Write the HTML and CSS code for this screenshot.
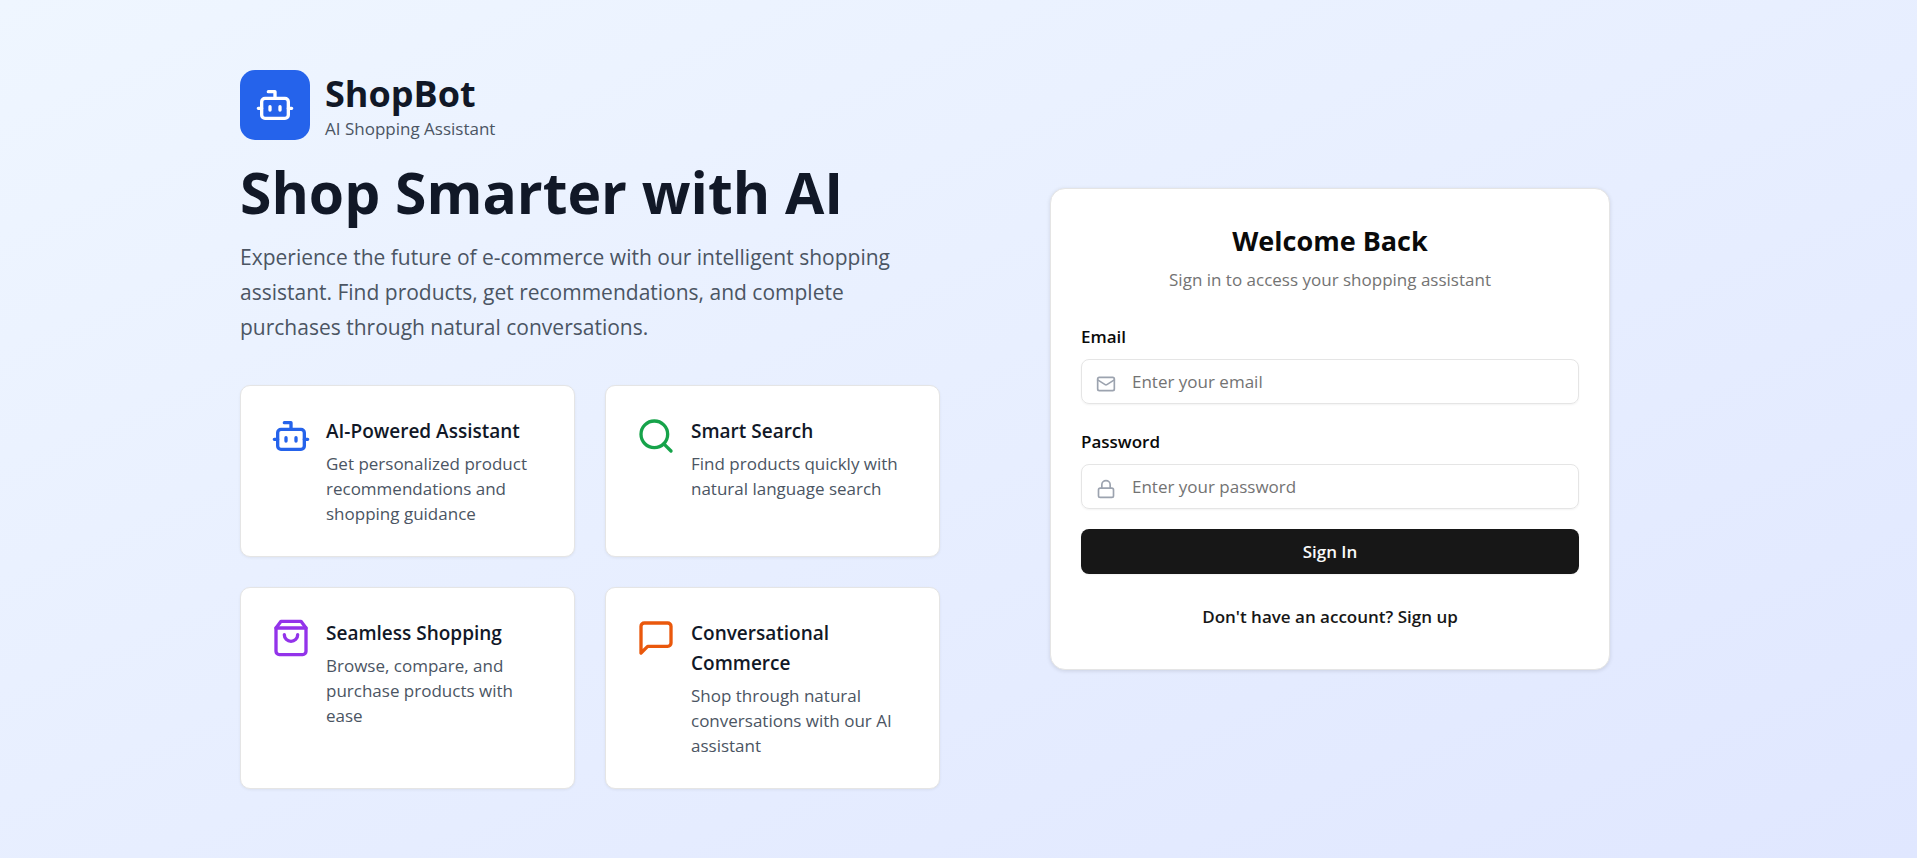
FILE: index.html
```html
<!DOCTYPE html>
<html lang="en">
<head>
<meta charset="utf-8">
<meta name="viewport" content="width=device-width, initial-scale=1">
<title>ShopBot - AI Shopping Assistant</title>
<link rel="stylesheet" href="styles.css">
</head>
<body>
<svg class="sprite" aria-hidden="true">
  <symbol id="bot" viewBox="0 0 24 24"><path d="M12 8V4H8"/><rect width="16" height="12" x="4" y="8" rx="2"/><path d="M2 14h2M20 14h2M15 13v2M9 13v2"/></symbol>
</svg>
<main class="page">
  <div class="columns">
    <section class="intro">
      <div class="brand">
        <div class="brand-mark"><svg class="icon icon-logo"><use href="#bot"/></svg></div>
        <div>
          <p class="brand-name">ShopBot</p>
          <p class="brand-tag">AI Shopping Assistant</p>
        </div>
      </div>
      <h1 class="headline">Shop Smarter with AI</h1>
      <p class="lead">Experience the future of e-commerce with our intelligent shopping assistant. Find products, get recommendations, and complete purchases through natural conversations.</p>
      <div class="features">
        <article class="feature">
          <svg class="icon icon-large blue"><use href="#bot"/></svg>
          <div>
            <h2 class="feature-title">AI-Powered Assistant</h2>
            <p class="feature-text">Get personalized product recommendations and shopping guidance</p>
          </div>
        </article>
        <article class="feature">
          <svg class="icon icon-large green" viewBox="0 0 24 24"><circle cx="11" cy="11" r="8"/><path d="m21 21-4.3-4.3"/></svg>
          <div>
            <h2 class="feature-title">Smart Search</h2>
            <p class="feature-text">Find products quickly with natural language search</p>
          </div>
        </article>
        <article class="feature">
          <svg class="icon icon-large purple" viewBox="0 0 24 24"><path d="M6 2 3 6v14a2 2 0 0 0 2 2h14a2 2 0 0 0 2-2V6l-3-4Z"/><path d="M3 6h18"/><path d="M16 10a4 4 0 0 1-8 0"/></svg>
          <div>
            <h2 class="feature-title">Seamless Shopping</h2>
            <p class="feature-text">Browse, compare, and purchase products with ease</p>
          </div>
        </article>
        <article class="feature">
          <svg class="icon icon-large orange" viewBox="0 0 24 24"><path d="M21 15a2 2 0 0 1-2 2H7l-4 4V5a2 2 0 0 1 2-2h14a2 2 0 0 1 2 2z"/></svg>
          <div>
            <h2 class="feature-title">Conversational Commerce</h2>
            <p class="feature-text">Shop through natural conversations with our AI assistant</p>
          </div>
        </article>
      </div>
    </section>
    <section class="login">
      <h2 class="login-title">Welcome Back</h2>
      <p class="login-text">Sign in to access your shopping assistant</p>
      <form class="form">
        <div class="field">
          <label class="label" for="email">Email</label>
          <div class="control">
            <svg class="icon icon-field" viewBox="0 0 24 24"><rect width="20" height="16" x="2" y="4" rx="2"/><path d="m22 7-8.97 5.7a1.94 1.94 0 0 1-2.06 0L2 7"/></svg>
            <input class="input" id="email" type="email" placeholder="Enter your email">
          </div>
        </div>
        <div class="field">
          <label class="label" for="password">Password</label>
          <div class="control">
            <svg class="icon icon-field" viewBox="0 0 24 24"><rect width="18" height="11" x="3" y="11" rx="2"/><path d="M7 11V7a5 5 0 0 1 10 0v4"/></svg>
            <input class="input" id="password" type="password" placeholder="Enter your password">
          </div>
        </div>
        <button class="submit" type="submit">Sign In</button>
      </form>
      <button class="switch" type="button">Don't have an account? Sign up</button>
    </section>
  </div>
</main>
</body>
</html>
```
FILE: styles.css
```css
* { box-sizing: border-box; }
body, h1, h2, p { margin: 0; }
body {
  font-family: "Open Sans", "Noto Sans", sans-serif;
  font-size: 17px;
  line-height: 25px;
  color: #0a0a0a;
}
button, input { font: inherit; color: inherit; }
.sprite { position: absolute; width: 0; height: 0; }
.icon {
  flex: none;
  fill: none;
  stroke: currentColor;
  stroke-width: 2;
  stroke-linecap: round;
  stroke-linejoin: round;
}
.page {
  min-height: 100vh;
  display: flex;
  align-items: center;
  justify-content: center;
  padding: 20px 0 20px 3px;
  background: linear-gradient(to bottom right, #eff6ff, #e0e7ff);
}
.columns {
  width: 100%;
  max-width: 1440px;
  display: grid;
  grid-template-columns: 1fr 1fr;
  gap: 40px;
  align-items: center;
}
.brand { display: flex; align-items: flex-start; gap: 15px; margin-bottom: 14px; }
.brand-mark {
  display: flex;
  padding: 15px;
  border-radius: 15px;
  background: #2563eb;
  color: #fff;
}
.icon-logo { width: 40px; height: 40px; }
.brand-name { font-size: 36px; line-height: 47px; font-weight: 700; color: #111827; }
.brand-tag { line-height: 24px; color: #4b5563; }
.headline { margin-bottom: 10px; font-size: 57px; line-height: 75px; font-weight: 700; color: #111827; }
.lead { margin-bottom: 40px; font-size: 21px; line-height: 35px; color: #4b5563; }
.features { display: grid; grid-template-columns: 1fr 1fr; gap: 30px; }
.feature {
  display: flex;
  gap: 15px;
  padding: 30px;
  border: 1px solid #e5e5e5;
  border-radius: 10px;
  background: #fff;
  box-shadow: 0 1px 3px rgba(0, 0, 0, 0.06);
}
.icon-large { width: 40px; height: 40px; }
.blue { color: #2563eb; }
.green { color: #16a34a; }
.purple { color: #9333ea; }
.orange { color: #ea580c; }
.feature-title { margin-bottom: 5px; font-size: 19px; line-height: 30px; font-weight: 600; color: #111827; }
.feature-text { color: #4b5563; }
.login {
  width: 100%;
  max-width: 560px;
  justify-self: center;
  padding: 30px;
  border: 1px solid #e5e5e5;
  border-radius: 15px;
  background: #fff;
  box-shadow: 0 1px 4px rgba(0, 0, 0, 0.12);
  text-align: center;
}
.login-title { margin-bottom: 4px; font-size: 27px; line-height: 44px; font-weight: 700; }
.login-text { margin-bottom: 32px; color: #737373; }
.form { display: grid; gap: 20px; margin-bottom: 20px; text-align: left; }
.field { display: grid; gap: 10px; }
.field + .field { margin-top: 5px; }
.label { font-weight: 600; }
.control { position: relative; display: flex; }
.icon-field { position: absolute; left: 15px; top: 15px; width: 20px; height: 20px; color: #9ca3af; }
.input {
  width: 100%;
  height: 45px;
  padding: 0 15px 0 50px;
  border: 1px solid #e5e5e5;
  border-radius: 8px;
  background: transparent;
  box-shadow: 0 1px 2px rgba(0, 0, 0, 0.05);
}
.input::placeholder { color: #737373; opacity: 1; }
.submit {
  height: 45px;
  border: 0;
  border-radius: 8px;
  background: #171717;
  color: #fafafa;
  font-weight: 600;
  box-shadow: 0 1px 2px rgba(0, 0, 0, 0.05);
}
.switch { height: 45px; padding: 0 20px; border: 0; background: none; color: #171717; font-weight: 600; }
```
